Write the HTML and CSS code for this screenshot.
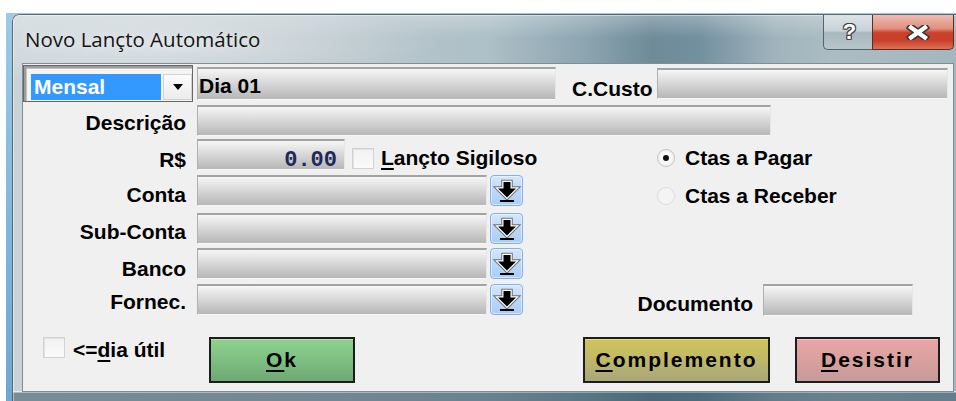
FILE: index.html
```html
<!DOCTYPE html>
<html lang="pt-BR">
<head>
<meta charset="utf-8">
<title>Novo Lançto Automático</title>
<link rel="stylesheet" href="styles.css">
</head>
<body>
<div class="desktop">
  <div class="window">
    <div class="titlebar">
      <span class="title">Novo Lançto Automático</span>
      <div class="caption">
        <span class="cap-btn cap-help">?</span>
        <span class="cap-btn cap-close">
          <svg width="24" height="15" viewBox="0 0 24 15">
            <path d="M5 2.5 L19 12.5 M5 12.5 L19 2.5" stroke="#3a3a3a" stroke-width="7.5" stroke-linecap="square" fill="none"/>
            <path d="M5 2.5 L19 12.5 M5 12.5 L19 2.5" stroke="#ffffff" stroke-width="4.2" stroke-linecap="square" fill="none"/>
          </svg>
        </span>
      </div>
    </div>

    <div class="client">
      <!-- periodicity, day and cost centre -->
      <div class="top-row">
        <div class="combo">
          <span class="combo-value">Mensal</span>
          <span class="combo-btn">
            <svg width="10" height="6" viewBox="0 0 10 6"><path d="M0 0H10L5 6Z" fill="#000"/></svg>
          </span>
        </div>
        <div class="field field-dia lbl">Dia 01</div>
        <span class="lbl lbl-ccusto">C.Custo</span>
        <div class="field field-ccusto"></div>
      </div>

      <span class="lbl cell-label p2">Descrição</span>
      <div class="cell-wide"><div class="field w-desc"></div></div>

      <span class="lbl cell-label p5">R$</span>
      <div class="cell-main">
        <div class="field field-valor">0.00</div>
        <span class="check check-sig"></span>
        <span class="lbl lbl-sig"><u>L</u>ançto Sigiloso</span>
      </div>

      <div class="radios">
        <div class="radio-item"><span class="radio on"></span><span class="lbl">Ctas a Pagar</span></div>
        <div class="radio-item"><span class="radio off"></span><span class="lbl">Ctas a Receber</span></div>
      </div>

      <span class="lbl cell-label p4">Conta</span>
      <div class="cell-main">
        <div class="field w-short"></div>
        <span class="pick">
          <svg width="31" height="29" viewBox="0 0 31 29">
            <path d="M12.5 6H19.5V12.5H25L16 21.5L7 12.5H12.5Z" fill="none" stroke="#707070" stroke-width="4.5"/>
            <path d="M12.5 6H19.5V12.5H25L16 21.5L7 12.5H12.5Z" fill="none" stroke="#ffffff" stroke-width="2.5"/>
            <path d="M12.5 6H19.5V12.5H25L16 21.5L7 12.5H12.5Z" fill="#000"/>
            <rect x="9" y="24" width="14" height="2" fill="#000"/>
          </svg>
        </span>
      </div>

      <span class="lbl cell-label p3">Sub-Conta</span>
      <div class="cell-main">
        <div class="field w-short"></div>
        <span class="pick">
          <svg width="31" height="29" viewBox="0 0 31 29">
            <path d="M12.5 6H19.5V12.5H25L16 21.5L7 12.5H12.5Z" fill="none" stroke="#707070" stroke-width="4.5"/>
            <path d="M12.5 6H19.5V12.5H25L16 21.5L7 12.5H12.5Z" fill="none" stroke="#ffffff" stroke-width="2.5"/>
            <path d="M12.5 6H19.5V12.5H25L16 21.5L7 12.5H12.5Z" fill="#000"/>
            <rect x="9" y="24" width="14" height="2" fill="#000"/>
          </svg>
        </span>
      </div>

      <span class="lbl cell-label p5">Banco</span>
      <div class="cell-main">
        <div class="field w-short"></div>
        <span class="pick">
          <svg width="31" height="29" viewBox="0 0 31 29">
            <path d="M12.5 6H19.5V12.5H25L16 21.5L7 12.5H12.5Z" fill="none" stroke="#707070" stroke-width="4.5"/>
            <path d="M12.5 6H19.5V12.5H25L16 21.5L7 12.5H12.5Z" fill="none" stroke="#ffffff" stroke-width="2.5"/>
            <path d="M12.5 6H19.5V12.5H25L16 21.5L7 12.5H12.5Z" fill="#000"/>
            <rect x="9" y="24" width="14" height="2" fill="#000"/>
          </svg>
        </span>
      </div>

      <span class="lbl cell-label p2">Fornec.</span>
      <div class="cell-wide">
        <div class="field w-short"></div>
        <span class="pick">
          <svg width="31" height="29" viewBox="0 0 31 29">
            <path d="M12.5 6H19.5V12.5H25L16 21.5L7 12.5H12.5Z" fill="none" stroke="#707070" stroke-width="4.5"/>
            <path d="M12.5 6H19.5V12.5H25L16 21.5L7 12.5H12.5Z" fill="none" stroke="#ffffff" stroke-width="2.5"/>
            <path d="M12.5 6H19.5V12.5H25L16 21.5L7 12.5H12.5Z" fill="#000"/>
            <rect x="9" y="24" width="14" height="2" fill="#000"/>
          </svg>
        </span>
        <div class="doc">
          <span class="lbl p4">Documento</span>
          <div class="field field-doc"></div>
        </div>
      </div>

      <!-- footer: business-day option and actions -->
      <div class="bottom-row">
        <div class="daycheck">
          <span class="check"></span>
          <span class="lbl lbl-day">&lt;=<u>d</u>ia útil</span>
        </div>
        <span class="btn btn-ok"><u>O</u>k</span>
        <span class="btn btn-compl"><u>C</u>omplemento</span>
        <span class="btn btn-cancel"><u>D</u>esistir</span>
      </div>
    </div>
  </div>
</div>
</body>
</html>
```

FILE: styles.css
```css
* { box-sizing: border-box; }

html, body {
  margin: 0;
  padding: 0;
  overflow: hidden;
  background: #ffffff;
}

body {
  width: 956px;
  height: 401px;
  font-family: "Liberation Sans", Arial, sans-serif;
}

/* desktop behind the dialog */
.desktop {
  margin: 13px 0 0 6px;
  height: 388px;
  padding: 1px 0 0 6px;
  background: linear-gradient(180deg, #9ccae6 0%, #7cb5db 60%, #6ea8d0 100%);
}

/* glass frame */
.window {
  width: 955px;
  height: 392px;
  border-radius: 7px 7px 0 0;
  display: flex;
  flex-direction: column;
  background:
    linear-gradient(180deg, rgba(255,255,255,.28) 0, rgba(255,255,255,0) 24px),
    linear-gradient(180deg, transparent 377px, rgba(255,255,255,.55) 377px, rgba(255,255,255,.55) 378px, rgba(40,70,88,.5) 379px),
    radial-gradient(ellipse 280px 42px at 150px 30px, rgba(255,255,255,.4), rgba(255,255,255,0)),
    linear-gradient(90deg, #c9d3d7 0%, #bfcacf 30%, #adbfc7 50%, #8ca5b0 60%, #6f8b99 67%, #7390a0 72%, #a1b4bc 80%, #acbcc3 86%, #a3b6be 100%);
  box-shadow: inset 0 0 0 1px rgba(45,62,72,.75), inset 0 0 0 2px rgba(255,255,255,.45);
}

.titlebar {
  height: 50px;
  display: flex;
  align-items: flex-start;
}

.title {
  padding: 11px 0 0 13px;
  font-family: "Open Sans", "Noto Sans", sans-serif;
  font-size: 20.5px;
  line-height: 28px;
  color: #141414;
  text-shadow: 0 0 8px rgba(255,255,255,.7);
}

.caption {
  display: flex;
  margin: 1px 13px 0 auto;
  height: 35px;
}

.cap-btn {
  display: flex;
  align-items: center;
  justify-content: center;
  height: 35px;
}

.cap-help {
  width: 49px;
  padding-left: 3px;
  border: 1px solid #53636c;
  border-top: 0;
  border-right: 0;
  border-radius: 0 0 0 5px;
  background: linear-gradient(180deg, #dde4e8 0%, #c7d1d6 47%, #a8b7bf 52%, #b8c5cb 100%);
  font: bold 22px/1 "Liberation Sans", Arial, sans-serif;
  color: #ffffff;
  text-shadow: 1px 0 #454545, -1px 0 #454545, 0 1px #454545, 0 -1px #454545,
               1px 1px #454545, -1px -1px #454545, 1px -1px #454545, -1px 1px #454545;
}

.cap-close {
  width: 82px;
  padding-left: 9px;
  border: 1px solid #5d2b25;
  border-top: 0;
  border-radius: 0 0 5px 0;
  background: linear-gradient(180deg, #eebcb0 0%, #e1907e 40%, #cd412b 52%, #c93f29 75%, #dc7159 100%);
}

/* dialog body */
.client {
  margin-left: 11px;
  width: 930px;
  height: 327px;
  background: #f0f0f0;
  box-shadow: 0 0 0 1px #7f8d95;
  display: grid;
  grid-template-columns: 174px 460px 296px;
  grid-template-rows: 41px 34px 36px 38px 35px 36px 53px 46px;
  align-items: start;
}

.lbl {
  font-weight: bold;
  font-size: 21px;
  line-height: 31px;
  color: #000;
  white-space: nowrap;
}

u {
  text-decoration-thickness: 2px;
  text-underline-offset: 3px;
}

.cell-label {
  grid-column: 1;
  text-align: right;
  padding-right: 11px;
}

.p2 { padding-top: 2px; }
.p3 { padding-top: 3px; }
.p4 { padding-top: 4px; }
.p5 { padding-top: 5px; }
.p6 { padding-top: 6px; }

.cell-main {
  grid-column: 2;
  display: flex;
  align-items: flex-start;
}

.cell-wide {
  grid-column: 2 / 4;
  display: flex;
  align-items: flex-start;
}

/* sunken grey edit box */
.field {
  height: 31px;
  border-style: solid;
  border-width: 2px 1px 1px 1px;
  border-color: #a3a3a3 #e6e6e6 #f7f7f7 #b0b0b0;
  background: linear-gradient(180deg, #f6f6f6 0%, #e3e3e3 30%, #c8c8c8 72%, #b7b7b7 100%);
}

.top-row {
  grid-column: 1 / -1;
  display: flex;
  align-items: flex-start;
  padding-top: 1px;
}

.combo {
  width: 170px;
  height: 37px;
  display: flex;
  padding: 8px 0 1px 7px;
  border: 1px solid #676767;
  background: #f4f4f4;
  box-shadow: inset 2px 2px 0 #9d9d9d, inset 3px 3px 0 #c4c4c4;
}

.combo-value {
  width: 130px;
  height: 26px;
  padding-left: 3px;
  background: #3399ff;
  color: #ffffff;
  font-weight: bold;
  font-size: 21px;
  line-height: 26px;
}

.combo-btn {
  width: 29px;
  height: 26px;
  margin-left: 2px;
  display: flex;
  align-items: center;
  justify-content: center;
  border: 1px solid #d2d2d2;
  background: linear-gradient(180deg, #fcfcfc, #ececec);
}

.field-dia {
  width: 359px;
  height: 33px;
  margin: 2px 0 0 4px;
  padding: 3px 0 0 1px;
  line-height: 27px;
}

.lbl-ccusto {
  width: 101px;
  padding: 8px 0 0 16px;
}

.field-ccusto {
  width: 291px;
  margin-top: 3px;
}

.w-desc { width: 574px; }
.w-short { width: 290px; }

.field-valor {
  width: 148px;
  padding: 7px 7px 0 0;
  text-align: right;
  font-family: "Liberation Mono", "Courier New", monospace;
  font-weight: bold;
  font-size: 22px;
  line-height: 26px;
  color: #1d2958;
}

.check {
  width: 22px;
  height: 21px;
  flex: none;
  border: 1px solid #d2d2d2;
  background: linear-gradient(180deg, #f2f2f2, #fafafa);
  box-shadow: inset 1px 1px 0 #e2e2e2;
}

.check-sig { margin: 9px 0 0 7px; }

.lbl-sig {
  margin-left: 7px;
  padding-top: 3px;
}

.radios {
  grid-column: 3;
  grid-row: 3 / 5;
  display: flex;
  flex-direction: column;
  gap: 7px;
  padding-top: 3px;
}

.radio-item {
  display: flex;
  align-items: center;
  gap: 10px;
}

.radio {
  width: 18px;
  height: 18px;
  border-radius: 50%;
  display: flex;
  align-items: center;
  justify-content: center;
}

.radio.on {
  border: 1px solid #c4c4c4;
  background: radial-gradient(circle, #ffffff 0%, #f4f4f4 60%, #e2e2e2 100%);
}

.radio.on::after {
  content: "";
  width: 6px;
  height: 6px;
  border-radius: 50%;
  background: #111;
}

.radio.off {
  border: 1px solid #dcdcdc;
  background: #f4f4f4;
}

/* blue lookup button with download-style arrow */
.pick {
  width: 33px;
  height: 31px;
  margin-left: 3px;
  border: 1px solid #80b1ea;
  border-radius: 4px;
  background: linear-gradient(180deg, #d4e7fb 0%, #bcd8f8 50%, #aacdf5 100%);
  box-shadow: inset 0 0 0 1px rgba(255,255,255,.5);
}

.pick svg { display: block; }

.doc {
  display: flex;
  align-items: flex-start;
  margin: 0 40px 0 auto;
}

.field-doc {
  width: 150px;
  height: 32px;
  margin-left: 10px;
}

.bottom-row {
  grid-column: 1 / -1;
  display: flex;
  align-items: flex-start;
}

.daycheck {
  width: 166px;
  margin-left: 20px;
  display: flex;
  align-items: flex-start;
}

.lbl-day {
  margin-left: 8px;
  padding-top: 2px;
  line-height: 21px;
}

.btn {
  height: 46px;
  display: flex;
  align-items: center;
  justify-content: center;
  border: 2px solid #1d1d1d;
  font-weight: bold;
  font-size: 21px;
  letter-spacing: 2px;
  color: #000;
  box-shadow: inset 0 1px 0 rgba(255,255,255,.35);
}

.btn-ok {
  width: 146px;
  background: linear-gradient(180deg, #8fd08f 0%, #80c283 45%, #6fa874 100%);
}

.btn-compl {
  width: 187px;
  margin-left: 228px;
  background: linear-gradient(180deg, #d1c45a 0%, #c1b967 45%, #a8a67b 100%);
}

.btn-cancel {
  width: 145px;
  margin-left: 25px;
  background: linear-gradient(180deg, #eba5a5 0%, #dba0a0 45%, #c79a9a 100%);
}
```
